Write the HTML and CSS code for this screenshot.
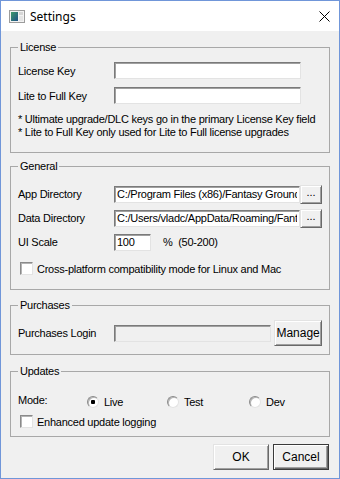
FILE: index.html
```html
<!DOCTYPE html>
<html lang="en">
<head>
    <meta charset="UTF-8">
    <title>Settings</title>
    <link rel="stylesheet" href="styles.css">
</head>
<body>
    <div class="window">
        <!-- Title bar -->
        <div class="titlebar">
            <svg class="app-icon" width="16" height="13" viewBox="0 0 16 13">
                <defs>
                    <linearGradient id="screen" x1="0" y1="0" x2="1" y2="1">
                        <stop offset="0" stop-color="#3f9a6a"/>
                        <stop offset="1" stop-color="#1d4f86"/>
                    </linearGradient>
                </defs>
                <rect x="0.5" y="0.5" width="15" height="12" fill="#f2f2f2" stroke="#9c9c9c"/>
                <rect x="2" y="2" width="7" height="9" fill="url(#screen)"/>
                <rect x="10" y="2" width="4" height="3" fill="#d6d6d6"/>
                <rect x="10" y="6" width="4" height="5" fill="#e4e4e4"/>
            </svg>
            <span class="title">Settings</span>
            <svg class="close" width="11" height="11" viewBox="0 0 11 11">
                <path d="M0.5 0.5 L10.5 10.5 M10.5 0.5 L0.5 10.5" stroke="#000" stroke-width="1"/>
            </svg>
        </div>

        <div class="content">
            <!-- License -->
            <fieldset class="group license">
                <legend>License</legend>
                <div class="row">
                    <label>License Key</label>
                    <input class="field" type="text">
                </div>
                <div class="row">
                    <label>Lite to Full Key</label>
                    <input class="field" type="text">
                </div>
                <div class="notes">
                    <p>* Ultimate upgrade/DLC keys go in the primary License Key field</p>
                    <p>* Lite to Full Key only used for Lite to Full license upgrades</p>
                </div>
            </fieldset>

            <!-- General -->
            <fieldset class="group general">
                <legend>General</legend>
                <div class="row tall">
                    <label>App Directory</label>
                    <input class="field" type="text" value="C:/Program Files (x86)/Fantasy Grounds">
                    <button class="btn browse">...</button>
                </div>
                <div class="row tall">
                    <label>Data Directory</label>
                    <input class="field" type="text" value="C:/Users/vladc/AppData/Roaming/Fantasy Grounds">
                    <button class="btn browse">...</button>
                </div>
                <div class="row tall">
                    <label>UI Scale</label>
                    <input class="field scale" type="text" value="100">
                    <span class="hint">%&nbsp;&nbsp;(50-200)</span>
                </div>
                <label class="check">
                    <input type="checkbox">
                    <span>Cross-platform compatibility mode for Linux and Mac</span>
                </label>
            </fieldset>

            <!-- Purchases -->
            <fieldset class="group purchases">
                <legend>Purchases</legend>
                <div class="row login">
                    <label>Purchases Login</label>
                    <input class="field login-field" type="text" disabled>
                    <button class="btn manage">Manage</button>
                </div>
            </fieldset>

            <!-- Updates -->
            <fieldset class="group updates">
                <legend>Updates</legend>
                <div class="mode-row">
                    <span class="mode-label">Mode:</span>
                    <label class="radio"><input type="radio" name="mode" checked><span>Live</span></label>
                    <label class="radio"><input type="radio" name="mode"><span>Test</span></label>
                    <label class="radio"><input type="radio" name="mode"><span>Dev</span></label>
                </div>
                <label class="check">
                    <input type="checkbox">
                    <span>Enhanced update logging</span>
                </label>
            </fieldset>

            <div class="dialog-buttons">
                <button class="btn dialog">OK</button>
                <button class="btn dialog default">Cancel</button>
            </div>
        </div>
    </div>
</body>
</html>
```

FILE: styles.css
```css
/* Basic Reset */
* {
    box-sizing: border-box;
    margin: 0;
    padding: 0;
}

body {
    background: #fff;
    color: #000;
    font-family: 'Liberation Sans', Arial, sans-serif;
    font-size: 11px;
    letter-spacing: -0.25px;
}

/* Window frame */
.window {
    width: 340px;
    height: 479px;
    border: 1px solid #7096d9;
    background: #f0f0f0;
    display: flex;
    flex-direction: column;
}

.titlebar {
    height: 30px;
    background: #fff;
    display: flex;
    align-items: center;
    padding-left: 8px;
    flex-shrink: 0;
}

.title {
    font-family: 'Noto Sans', sans-serif;
    font-size: 12px;
    letter-spacing: 0;
    margin-left: 5px;
}

.close {
    margin-left: auto;
    margin-right: 9px;
}

.content {
    padding: 0 9px;
}

/* Group boxes */
.group {
    border: 1px solid #a8a8a8;
    padding: 8px 7px 13px;
    min-width: 0;
}

.group legend {
    padding: 0 2px;
    line-height: 13px;
}

.license {
    margin-top: 10px;
}

.general {
    margin-top: 7px;
    padding-top: 11px;
    padding-bottom: 14px;
}

.purchases {
    margin-top: 9px;
    padding-bottom: 8px;
}

.updates {
    margin-top: 10px;
    padding-top: 17px;
    padding-bottom: 8px;
}

/* Label + field rows */
.row {
    display: flex;
    align-items: center;
    height: 17px;
}

.row + .row {
    margin-top: 8px;
}

.row.tall {
    height: 20px;
}

.row.tall + .row.tall {
    margin-top: 4px;
}

.row.login {
    height: 26px;
}

.row label {
    width: 96px;
    flex-shrink: 0;
}

.field {
    width: 187px;
    height: 17px;
    border: 1px solid;
    border-color: #7a7a7a #e3e3e3 #e3e3e3 #7a7a7a;
    box-shadow: inset 1px 1px #a0a0a0;
    background: #fff;
    font: inherit;
    letter-spacing: inherit;
    color: #000;
    padding: 0 2px;
    outline: none;
}

.field.scale {
    width: 37px;
}

.field.login-field {
    width: 158px;
    background: #f0f0f0;
}

.hint {
    margin-left: 12px;
    white-space: pre;
}

.notes {
    margin-top: 9px;
    line-height: 13px;
}

/* Buttons */
.btn {
    font: inherit;
    color: #000;
    background: #f0f0f0;
    border: 1px solid;
    border-color: #e3e3e3 #696969 #696969 #e3e3e3;
    box-shadow: inset 1px 1px #fff, inset -1px -1px #a0a0a0;
}

.btn.browse {
    width: 22px;
    height: 19px;
    line-height: 12px;
    padding-bottom: 4px;
}

.btn.manage {
    width: 48px;
    height: 26px;
    margin-left: 3px;
    font-size: 12px;
}

.dialog-buttons {
    display: flex;
    justify-content: flex-end;
    gap: 4px;
    margin-top: 7px;
    margin-right: 1px;
}

.btn.dialog {
    width: 56px;
    height: 26px;
    font-size: 12px;
}

.btn.default {
    border-color: #3a3a3a;
    box-shadow: inset 1px 1px #fff, inset -1px -1px #696969, inset -2px -2px #a0a0a0;
}

/* Checkboxes and radios */
.check {
    display: flex;
    align-items: center;
    height: 13px;
    padding-left: 2px;
}

.general .check {
    margin-top: 10px;
}

.updates .check {
    margin-top: 7px;
}

.check input,
.radio input {
    appearance: none;
    width: 13px;
    height: 13px;
    background: #fff;
    border: 1px solid;
    border-color: #8a8a8a #e3e3e3 #e3e3e3 #8a8a8a;
    box-shadow: inset 1px 1px #b4b4b4;
    flex-shrink: 0;
}

.check span {
    margin-left: 4px;
}

.mode-row {
    display: grid;
    grid-template-columns: 69px 80px 82px auto;
    align-items: center;
    height: 13px;
}

.mode-label {
    position: relative;
    top: -2px;
}

.radio {
    display: flex;
    align-items: center;
}

.radio input {
    width: 12px;
    height: 12px;
    border-radius: 50%;
}

.radio input:checked {
    background: radial-gradient(circle, #000 0 2px, #fff 2.5px);
}

.radio span {
    margin-left: 5px;
}
```
